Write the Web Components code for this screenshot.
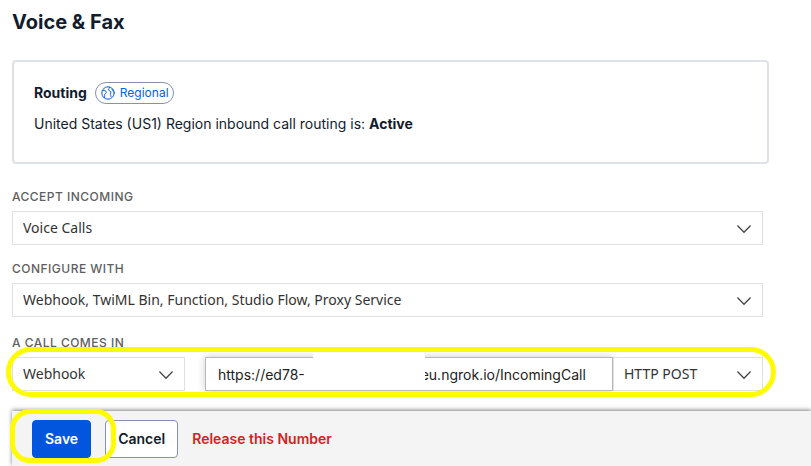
<!DOCTYPE html>
<html lang="en">
<head>
<meta charset="utf-8">
<meta name="viewport" content="width=device-width, initial-scale=1">
<title>Voice &amp; Fax</title>
<style>
body {
  margin: 0;
  background: #fff;
  color: #121c2d;
  font-family: Inter, "Liberation Sans", sans-serif;
  font-size: 14px;
  line-height: 20px;
}
</style>
</head>
<body>
<voice-settings>
  <routing-card slot="routing" region="United States (US1)" status="Active">
    <region-badge>Regional</region-badge>
  </routing-card>
  <form-field label="Accept incoming">
    <select-box label="Accept incoming" value="Voice Calls"></select-box>
  </form-field>
  <form-field label="Configure with">
    <select-box label="Configure with" value="Webhook, TwiML Bin, Function, Studio Flow, Proxy Service"></select-box>
  </form-field>
  <form-field label="A call comes in" last>
    <call-handler></call-handler>
  </form-field>
  <action-bar slot="actions"></action-bar>
</voice-settings>

<script>
const define = (name, html, setup) => {
  const template = document.createElement("template");
  template.innerHTML = html;

  customElements.define(name, class extends HTMLElement {
    constructor() {
      super();
      const shadow = this.attachShadow({ mode: "open" });
      shadow.appendChild(template.content.cloneNode(true));
    }

    connectedCallback() {
      if (setup) setup(this, this.shadowRoot);
    }
  });
};

define("voice-settings", `
<style>
:host {
  display: block;
  padding: 8px 0 0 12px;
  overflow: hidden;
}
h1 {
  margin: 0 0 24px;
  font-size: 20px;
  line-height: 28px;
  font-weight: 700;
}
.routing {
  margin-right: 42px;
}
.fields {
  display: grid;
  gap: 14px;
  margin: 23px 48px 20px 0;
}
</style>
<h1>Voice &amp; Fax</h1>
<div class="routing"><slot name="routing"></slot></div>
<div class="fields"><slot></slot></div>
<slot name="actions"></slot>
`);

define("routing-card", `
<style>
:host {
  display: block;
  padding: 20px 20px 28px;
  border: 2px solid #dee2e6;
  border-radius: 4px;
}
.head {
  display: flex;
  align-items: center;
  gap: 8px;
  margin-bottom: 10px;
}
h2 {
  margin: 0;
  font-size: 14px;
  line-height: 20px;
  font-weight: 700;
}
p {
  margin: 0;
}
</style>
<div class="head"><h2>Routing</h2><slot></slot></div>
<p><span class="region"></span> Region inbound call routing is: <strong></strong></p>
`, (host, root) => {
  root.querySelector(".region").textContent = host.getAttribute("region");
  root.querySelector("strong").textContent = host.getAttribute("status");
});

define("region-badge", `
<style>
:host {
  display: inline-flex;
  align-items: center;
  gap: 5px;
  padding: 0 4px 0 5px;
  border: 1px solid #8891aa;
  border-radius: 11px;
  color: #0263e0;
  font-size: 12px;
  line-height: 20px;
}
</style>
<svg width="14" height="14" viewBox="0 0 14 14" fill="none" stroke="currentColor" stroke-linecap="round" stroke-linejoin="round" aria-hidden="true">
  <circle cx="7" cy="7" r="6.2"></circle>
  <path d="M1.5 4.600C3 4.300 5.200 4.500 5.300 6.200 5.400 7.600 4 7.500 3.600 8.400 3.300 9.200 4.200 9.800 3.400 11.600"></path>
  <path d="M8.600 1.200C8.900 2.300 7.200 2.700 7.400 3.800 7.600 5 9.500 4.600 9.900 5.800 10.200 6.800 9.200 7.400 9.300 8.400 9.400 9.300 10.300 9.500 10 10.600M11.200 3C10.700 4 11.500 4.900 12.800 5.100"></path>
</svg>
<slot></slot>
`);

define("form-field", `
<style>
:host {
  display: block;
}
:host([last]) {
  margin-top: 2px;
}
.label {
  display: block;
  margin-bottom: 4px;
  color: #606060;
  font-size: 12px;
  line-height: 20px;
  font-weight: 500;
  letter-spacing: 0.04em;
  text-transform: uppercase;
}
</style>
<span class="label"></span>
<slot></slot>
`, (host, root) => {
  root.querySelector(".label").textContent = host.getAttribute("label");
});

define("select-box", `
<style>
:host {
  display: block;
  position: relative;
}
select {
  display: block;
  width: 100%;
  height: 34px;
  box-sizing: border-box;
  padding: 0 40px 0 10px;
  border: 1px solid #e0e0e0;
  border-radius: 0;
  appearance: none;
  background: #fff;
  color: #333;
  font-family: "Noto Sans", "Open Sans", sans-serif;
  font-size: 14px;
  line-height: 20px;
}
svg {
  position: absolute;
  top: 13px;
  right: 12px;
  pointer-events: none;
}
</style>
<select><option></option></select>
<svg width="14" height="10" viewBox="0 0 14 10" fill="none" stroke="#444" stroke-width="1.3" aria-hidden="true">
  <path d="M.4 1.500 7 8.300l6.600-6.800"></path>
</svg>
`, (host, root) => {
  root.querySelector("select").setAttribute("aria-label", host.getAttribute("label"));
  root.querySelector("option").textContent = host.getAttribute("value");
});

define("call-handler", `
<style>
:host {
  display: grid;
  grid-template-columns: 173fr 20px 408fr 150fr;
  position: relative;
}
.url {
  grid-column: 3;
  position: relative;
}
input {
  display: block;
  width: 100%;
  height: 34px;
  box-sizing: border-box;
  padding: 0 12px;
  border: 1px solid #b8b8b8;
  border-radius: 0;
  background: #fff;
  box-shadow: 0 0 8px rgba(0, 0, 0, .2);
  color: #222;
  font: inherit;
}
/* keeps the tunnel id out of sight */
.mask {
  position: absolute;
  top: -5px;
  left: 108px;
  width: 112px;
  height: 38px;
  background: #fff;
}
.ring {
  position: absolute;
  inset: -10px -13px -6px -6px;
  border: 5px solid #fffb00;
  border-radius: 25px;
  pointer-events: none;
}
</style>
<select-box label="Handler" value="Webhook"></select-box>
<div class="url">
  <input type="text" aria-label="Webhook URL" value="https://ed78-&emsp;&emsp;&emsp;&emsp;&emsp;&emsp;&emsp;&emsp; eu.ngrok.io/IncomingCall">
  <div class="mask"></div>
</div>
<select-box label="HTTP method" value="HTTP POST"></select-box>
<div class="ring"></div>
`);

define("action-bar", `
<style>
:host {
  display: flex;
  align-items: center;
  gap: 14px;
  padding: 9px 20px 8px;
  background: #f4f4f4;
  box-shadow: 0 -1px 4px rgba(0, 0, 0, .5);
}
button {
  height: 38px;
  padding: 0 12px;
  border: 1px solid #8891aa;
  border-radius: 4px;
  background: #fff;
  color: #121c2d;
  font: inherit;
  font-weight: 600;
}
.save {
  border-color: #0256de;
  background: #0256de;
  color: #fff;
}
.release {
  color: #d61f1f;
  font-weight: 600;
  text-decoration: none;
}
.marked {
  display: flex;
  position: relative;
}
.ring {
  position: absolute;
  inset: -11px -25px -5px -22px;
  border: 5px solid #fffb00;
  border-radius: 20px;
  pointer-events: none;
  z-index: 1;
}
</style>
<div class="marked"><button class="save" type="button">Save</button><div class="ring"></div></div>
<button type="button">Cancel</button>
<a class="release" href="#release">Release this Number</a>
`);
</script>
</body>
</html>
